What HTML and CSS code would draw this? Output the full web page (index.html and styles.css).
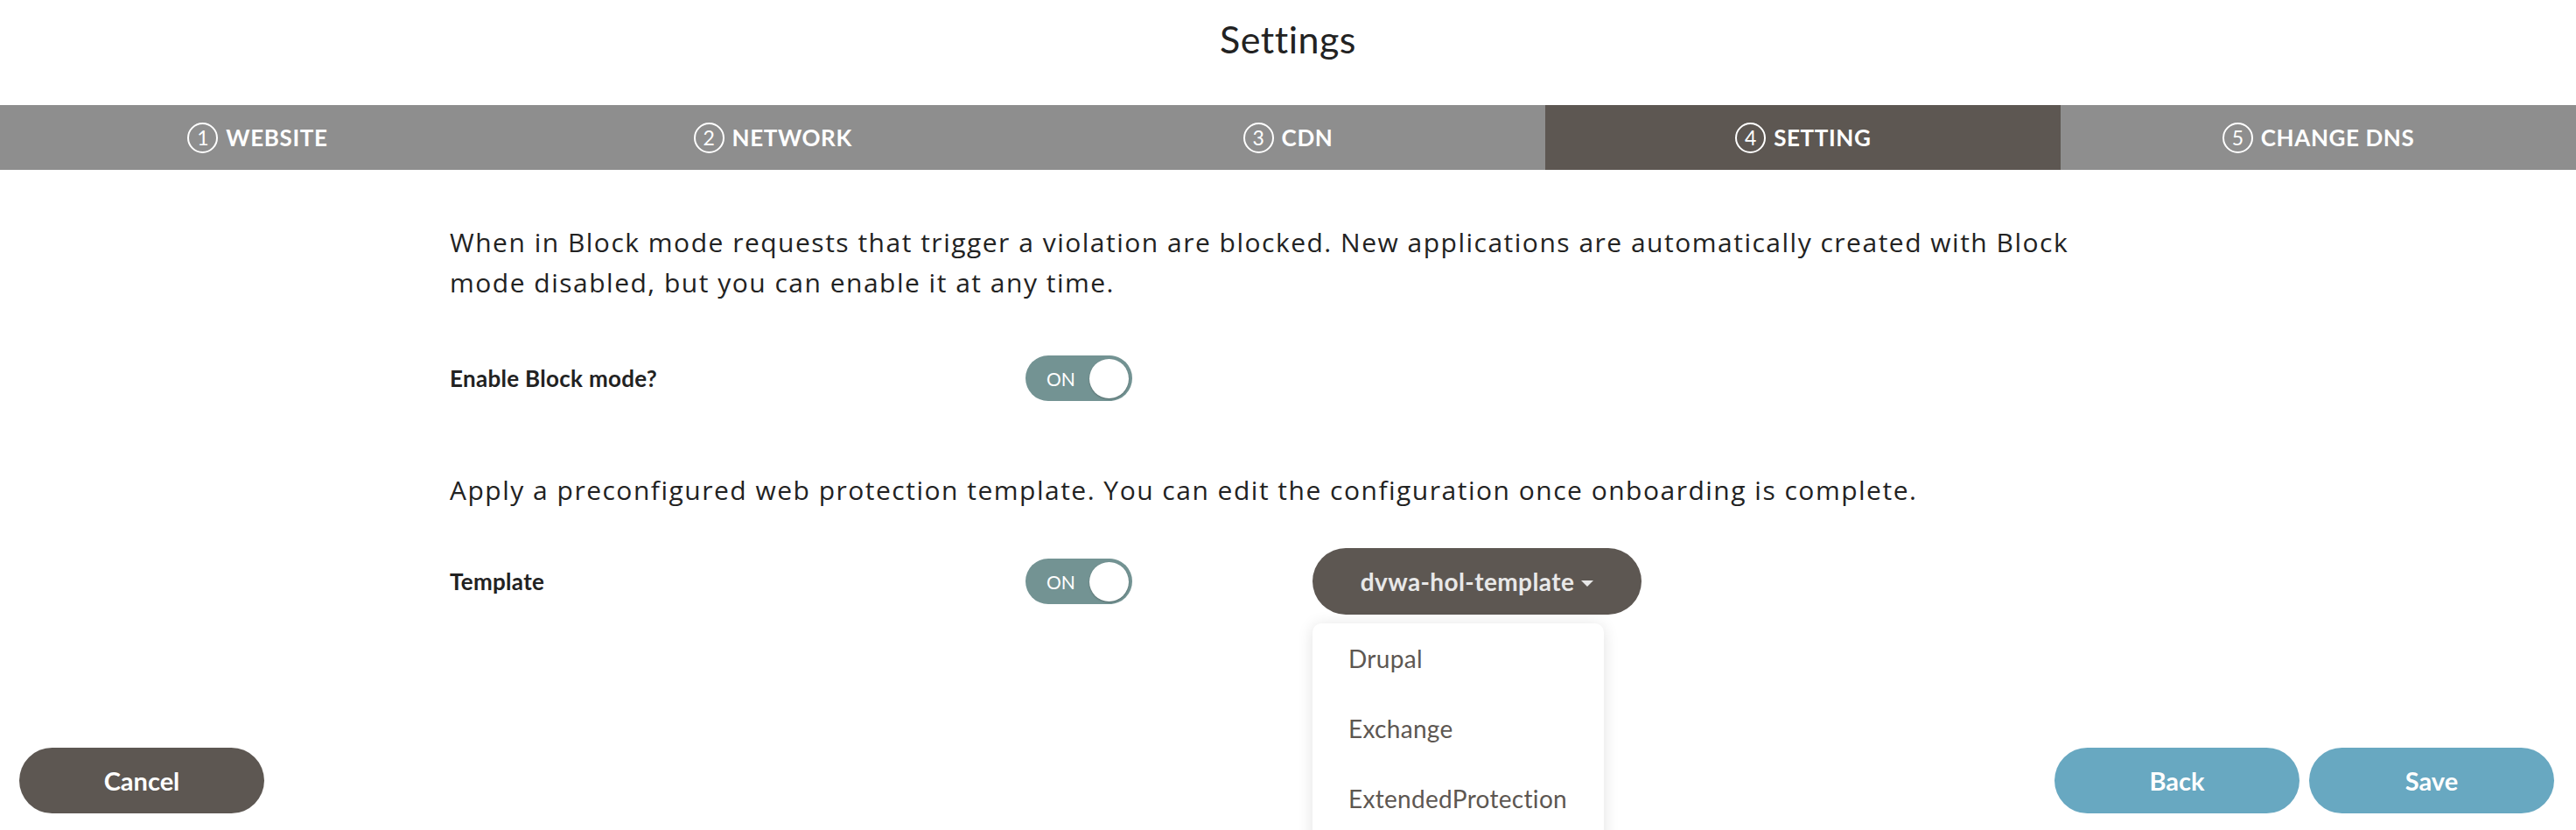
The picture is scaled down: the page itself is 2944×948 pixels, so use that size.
FILE: index.html
```html
<!DOCTYPE html>
<html lang="en">
<head>
<meta charset="utf-8">
<title>Settings</title>
<link rel="stylesheet" href="styles.css">
</head>
<body>
<div class="page">
  <h1 class="title">Settings</h1>
  <nav class="steps">
    <div class="step"><span class="num">1</span><span class="step-label">WEBSITE</span></div>
    <div class="step"><span class="num">2</span><span class="step-label">NETWORK</span></div>
    <div class="step"><span class="num">3</span><span class="step-label">CDN</span></div>
    <div class="step step-active"><span class="num">4</span><span class="step-label">SETTING</span></div>
    <div class="step"><span class="num">5</span><span class="step-label">CHANGE DNS</span></div>
  </nav>
  <main class="content">
    <p class="desc">When in Block mode requests that trigger a violation are blocked. New applications are automatically created with Block mode disabled, but you can enable it at any time.</p>
    <div class="row row-block">
      <div class="label">Enable Block mode?</div>
      <div class="toggle"><span class="toggle-text">ON</span><span class="knob"></span></div>
    </div>
    <p class="desc desc-template">Apply a preconfigured web protection template. You can edit the configuration once onboarding is complete.</p>
    <div class="row row-template">
      <div class="label">Template</div>
      <div class="toggle"><span class="toggle-text">ON</span><span class="knob"></span></div>
      <div class="dropdown">
        <button class="dd-button">dvwa-hol-template<span class="caret"></span></button>
        <ul class="menu">
          <li class="menu-item">Drupal</li>
          <li class="menu-item">Exchange</li>
          <li class="menu-item">ExtendedProtection</li>
        </ul>
      </div>
    </div>
  </main>
  <footer class="footer">
    <button class="btn btn-dark">Cancel</button>
    <div class="footer-right">
      <button class="btn btn-blue">Back</button>
      <button class="btn btn-blue">Save</button>
    </div>
  </footer>
</div>
</body>
</html>
```
FILE: styles.css
```css
* { box-sizing: border-box; }
html, body { margin: 0; padding: 0; }
body {
  font-family: Lato, "Open Sans", sans-serif;
  color: #222;
  background: #fff;
  overflow: hidden;
}
.page {
  height: 948px;
  display: flex;
  flex-direction: column;
}
.title {
  margin: 0;
  height: 120px;
  padding-top: 20px;
  font-size: 43px;
  line-height: 50px;
  font-weight: 400;
  letter-spacing: 0.5px;
  text-align: center;
  color: #222;
}
.steps {
  display: flex;
  height: 74px;
  background: #8e8e8e;
}
.step {
  flex: 1 1 0;
  display: flex;
  align-items: center;
  justify-content: center;
  gap: 9px;
  color: #fff;
  font-size: 26px;
  font-weight: 700;
  letter-spacing: 0.6px;
}
.step-active { background: #5d5752; }
.num {
  flex-shrink: 0;
  width: 35px;
  height: 35px;
  border: 2.5px solid #fff;
  border-radius: 50%;
  display: flex;
  align-items: center;
  justify-content: center;
  font-size: 23px;
  font-weight: 400;
  letter-spacing: 0;
  line-height: 1;
}
.content {
  width: 1916px;
  margin: 0 auto;
  padding-top: 60px;
}
.desc {
  margin: 0;
  font-family: "Open Sans", Lato, sans-serif;
  font-size: 30px;
  line-height: 46px;
  letter-spacing: 1.5px;
  color: #222;
}
.row {
  display: grid;
  grid-template-columns: 658px 328px auto;
  align-items: center;
}
.row-block { margin-top: 60px; height: 52px; }
.desc-template { margin-top: 79px; }
.row-template { margin-top: 43px; height: 76px; }
.label {
  font-size: 26px;
  font-weight: 700;
  letter-spacing: 0.3px;
  color: #222;
}
.toggle {
  width: 122px;
  height: 52px;
  border-radius: 26px;
  background: #739393;
  display: flex;
  align-items: center;
  justify-content: space-between;
  padding: 0 4px 0 24px;
}
.toggle-text {
  color: #fff;
  font-size: 21px;
  font-weight: 400;
}
.knob {
  width: 45px;
  height: 45px;
  border-radius: 50%;
  background: #fff;
  box-shadow: 0 1px 2px rgba(0,0,0,0.25);
}
.dropdown {
  position: relative;
  justify-self: start;
}
.dd-button {
  width: 376px;
  height: 76px;
  border: none;
  border-radius: 38px;
  background: #5d5752;
  color: #e8e8e8;
  font-family: Lato, sans-serif;
  font-size: 28px;
  font-weight: 700;
  letter-spacing: 0.4px;
  display: flex;
  align-items: center;
  justify-content: center;
  gap: 8px;
  padding: 0;
}
.caret {
  width: 0;
  height: 0;
  border-left: 7px solid transparent;
  border-right: 7px solid transparent;
  border-top: 7px solid #e8e8e8;
  margin-top: 4px;
}
.menu {
  position: absolute;
  top: 86px;
  left: 0;
  width: 333px;
  height: 260px;
  margin: 0;
  padding: 0;
  list-style: none;
  background: #fff;
  border-radius: 10px;
  box-shadow: 0 2px 18px rgba(0,0,0,0.12);
}
.menu-item {
  height: 80px;
  line-height: 80px;
  padding-left: 41px;
  font-size: 28px;
  letter-spacing: 0.3px;
  color: #5d5752;
}
.footer {
  margin-top: auto;
  display: flex;
  justify-content: space-between;
  align-items: center;
  padding: 0 25px 19px 22px;
}
.footer-right {
  display: flex;
  gap: 11px;
}
.btn {
  width: 280px;
  height: 75px;
  border: none;
  border-radius: 38px;
  color: #fff;
  font-family: Lato, sans-serif;
  font-size: 29px;
  font-weight: 700;
  padding: 0;
}
.btn-dark { background: #5d5752; }
.btn-blue { background: #68a8c1; }
```
